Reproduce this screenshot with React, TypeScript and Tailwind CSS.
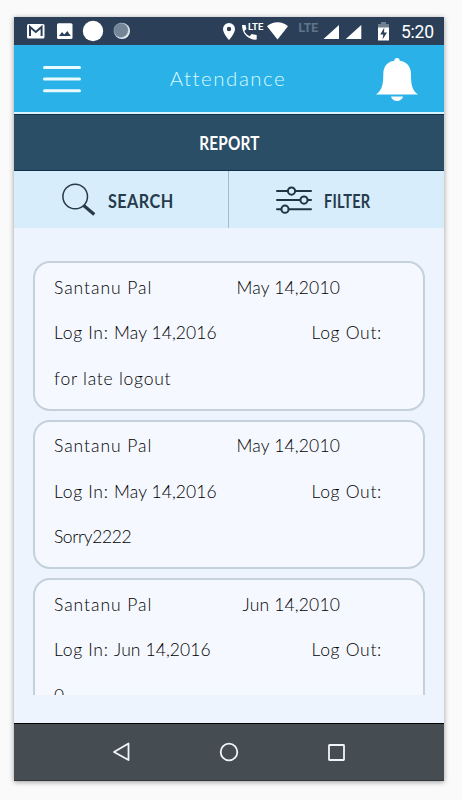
import type { ReactNode } from "react";

const records = [
  { name: "Santanu Pal", date: "May 14,2010", login: "May 14,2016", note: "for late logout", noteClass: "tracking-[0.77px]" },
  { name: "Santanu Pal", date: "May 14,2010", login: "May 14,2016", note: "Sorry2222", noteClass: "tracking-[-0.4px]" },
  { name: "Santanu Pal", date: "Jun 14,2010", login: "Jun 14,2016", note: "0", noteClass: "" },
];

function Row({ children }: { children: ReactNode }) {
  return <div className="flex h-[45.5px] items-center justify-between whitespace-pre">{children}</div>;
}

function StatusBar() {
  return (
    <div className="h-[28px] shrink-0 bg-[#2b4058]">
      <svg width="430" height="28" viewBox="14 17 430 28" className="block" fill="#fff">
        <rect x="27" y="24" width="17.5" height="14.5" rx="1.5" />
        <path d="M30 36V27l5.8 5 5.8-5v9" fill="none" stroke="#2b4058" strokeWidth="2" />
        <rect x="57" y="23.3" width="15.5" height="15.7" rx="1.5" />
        <path d="M59 36l3-4 2.3 2.6 3-3.6 3.5 5z" fill="#2b4058" />
        <circle cx="93" cy="31" r="10.2" />
        <circle cx="122" cy="31" r="8" fill="#e4edf2" />
        <circle cx="121" cy="30.3" r="7.1" fill="#738597" stroke="#8f9eac" strokeDasharray="1 1" />
        <path fillRule="evenodd" d="M229 23a6 6 0 0 0-6 6c0 4.5 6 11 6 11s6-6.500 6-11a6 6 0 0 0-6-6zm0 3.800a2.200 2.200 0 1 1 0 4.400a2.200 2.200 0 0 1 0-4.400z" />
        <path d="M242 25h3.500l1 4-2.200 2c1.200 2.500 3 4.200 5.300 5.300l2.100-2.200 5 1v3.600c0 .8-.4 1-1 1C248 39.700 242 33.500 242 25z" />
        <path d="M267 26.300c6-5.300 15-5.300 21 0L277.500 39.500z" />
        <path d="M339 25v14h-15.500zM361.300 25v14h-15.500z" />
        <path d="M381 24h3v-2h5v2h3v5h-11z" fill="#71808f" transform="translate(-3 0)" />
        <rect x="378" y="27.500" width="11" height="13" />
        <path d="M384.300 27.500l-4 7h3l-.8 5 4.500-7h-3z" fill="#2b4058" />
        <text x="248" y="30.200" fontSize="9.800" fontWeight="700" fontFamily="Roboto, sans-serif" textLength="15.300" lengthAdjust="spacingAndGlyphs">LTE</text>
        <text x="298.500" y="32" fontSize="12" fontWeight="700" fill="#61758a" fontFamily="Roboto, sans-serif" textLength="19.500" lengthAdjust="spacingAndGlyphs">LTE</text>
        <text x="401" y="38" fontSize="17.500" fontFamily="Roboto, sans-serif" textLength="33">5:20</text>
      </svg>
    </div>
  );
}

function Header() {
  return (
    <header className="flex h-[67px] shrink-0 items-center justify-between bg-[#2ab1e8] pl-[29px] pr-[26px]">
      <svg width="38" height="30" viewBox="0 0 38 30" className="shrink-0" stroke="#e9fbff" strokeWidth="3" strokeLinecap="round">
        <path d="M1.500 3.400h35M1.500 15.100h35M1.500 26.800h35" />
      </svg>
      <h1 className="ml-[-1px] whitespace-nowrap text-[20.5px] font-light tracking-[1.5px] text-[#d9faff]">Attendance</h1>
      <svg width="42" height="46" viewBox="0 0 42 46" fill="#fff" className="shrink-0">
        <path d="M18.300 4.700a2.700 2.700 0 0 1 5.400 0C31 5.500 35 11 35 18c0 9 .5 16 7 20.500H0C6.500 34 7.300 27 7.300 18C7.300 11 11 5.500 18.300 4.700z" />
        <path d="M15 40.500h12c-.8 2.800-3 4.600-6 4.600s-5.200-1.800-6-4.600z" />
      </svg>
    </header>
  );
}

function SearchIcon() {
  return (
    <svg width="34" height="34" viewBox="0 0 34 34" fill="none" stroke="#263849">
      <circle cx="13.200" cy="13.500" r="12.300" strokeWidth="1.500" />
      <path d="M21.700 22.500L32.300 31.500" strokeWidth="3.200" />
    </svg>
  );
}

function FilterIcon() {
  return (
    <svg width="36" height="28" viewBox="0 0 36 28" fill="none" stroke="#1f3544" strokeWidth="2" strokeLinecap="round">
      <path d="M1 5.100h10.800M19.200 5.100H35M1 14.100h23.300M31.700 14.100H35M1 23.200h4.300M12.700 23.200H35" />
      <circle cx="15.500" cy="5.100" r="3.600" />
      <circle cx="28" cy="14.100" r="3.600" />
      <circle cx="9" cy="23.200" r="3.600" />
    </svg>
  );
}

export default function App() {
  return (
    <div className="h-[800px] w-[462px] overflow-hidden bg-[#fafafa] pl-[14px] pt-[17px] font-['Lato',sans-serif] text-black">
      <div className="flex h-[764px] w-[430px] flex-col bg-[#edf4fe] shadow-[0_1px_5px_rgba(0,0,0,0.4)]">
        <StatusBar />
        <Header />
        <div className="h-[2px] shrink-0 bg-[#d5f4ff]" />
        <div className="flex h-[57px] shrink-0 items-center justify-center border-y border-[#122f4b] bg-[#2b4e67] text-[18px] font-bold text-white">
          <span className="mt-[2px] inline-block scale-x-[0.85] tracking-[0.2px]">REPORT</span>
        </div>
        <div className="flex h-[57px] shrink-0 bg-[#d8edfb] text-[18px] font-bold text-[#263b4c]">
          <button className="flex w-[215px] items-center border-r border-[#a6bbc9] pl-[48px]">
            <SearchIcon />
            <span className="ml-[12px] mt-[3px] inline-block origin-left scale-x-[0.9] tracking-[0.5px]">SEARCH</span>
          </button>
          <button className="flex flex-1 items-center pl-[47px]">
            <FilterIcon />
            <span className="ml-[12px] mt-[3px] inline-block origin-left scale-x-[0.81] tracking-[0.2px]">FILTER</span>
          </button>
        </div>
        <main className="flex h-[467px] shrink-0 flex-col gap-[9px] overflow-hidden px-[19px] pt-[33px] text-[17.5px] font-light">
          {records.map((record, index) => (
            <article key={index} className="h-[149.5px] shrink-0 rounded-[17px] border-2 border-[#c4d1da] bg-[#f5f8fe] pl-[19px] pr-[41px] pt-[2px]">
              <Row>
                <span className="tracking-[0.95px]">{record.name}</span>
                <span className="mr-[42px] tracking-[0.15px]">{record.date}</span>
              </Row>
              <Row>
                <span className="tracking-[0.7px]">
                  {"Log In: "}
                  <span className="tracking-[0.1px]">{record.login}</span>
                </span>
                <span className="tracking-[0.7px]">Log Out:</span>
              </Row>
              <Row>
                <span className={record.noteClass}>{record.note}</span>
              </Row>
            </article>
          ))}
        </main>
        <nav className="mt-auto flex h-[58px] shrink-0 items-center justify-between border-b border-t border-b-[#32383d] border-t-black bg-[#454d53] pl-[99px] pr-[99px]">
          <svg width="17" height="20" viewBox="0 0 17 20" fill="none" stroke="#f0f5f6" strokeWidth="1.800" strokeLinejoin="round"><path d="M15.500 1.500v16.500L1 10z" /></svg>
          <svg width="20" height="20" viewBox="0 0 20 20" fill="none" stroke="#f0f5f6" strokeWidth="1.800"><circle cx="10" cy="10" r="8.300" /></svg>
          <svg width="17" height="17" viewBox="0 0 17 17" fill="none" stroke="#f0f5f6" strokeWidth="1.800"><rect x="1" y="1" width="15" height="15" rx="0.500" /></svg>
        </nav>
      </div>
    </div>
  );
}
